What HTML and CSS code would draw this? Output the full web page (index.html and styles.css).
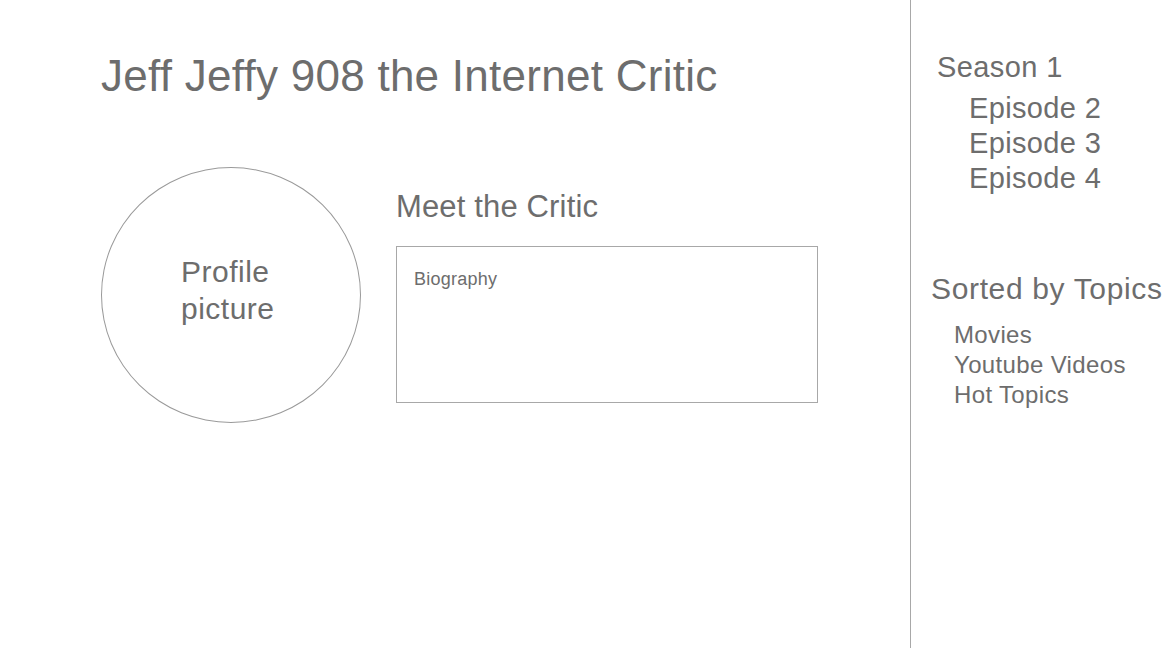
FILE: index.html
```html
<!DOCTYPE html>
<html lang="en">
<head>
<meta charset="utf-8">
<title>Jeff Jeffy 908 the Internet Critic</title>
<link rel="stylesheet" href="styles.css">
</head>
<body>
<div class="page">
  <main class="main">
    <h1 class="title">Jeff Jeffy 908 the Internet Critic</h1>
    <section class="profile">
      <div class="avatar">
        <div class="avatar-text">Profile<br>picture</div>
      </div>
      <div class="about">
        <h2 class="about-title">Meet the Critic</h2>
        <div class="bio">Biography</div>
      </div>
    </section>
  </main>
  <aside class="sidebar">
    <h3 class="season">Season 1</h3>
    <ul class="episodes">
      <li>Episode 2</li>
      <li>Episode 3</li>
      <li>Episode 4</li>
    </ul>
    <h3 class="topics-title">Sorted by Topics</h3>
    <ul class="topics">
      <li>Movies</li>
      <li>Youtube Videos</li>
      <li>Hot Topics</li>
    </ul>
  </aside>
</div>
</body>
</html>
```

FILE: styles.css
```css
* { box-sizing: border-box; }

html, body {
  margin: 0;
  padding: 0;
  background: #ffffff;
}

body {
  font-family: "Liberation Sans", Arial, Helvetica, sans-serif;
  color: #6d6d6d;
}

.page {
  display: flex;
  width: 1165px;
  height: 648px;
  overflow: hidden;
}

.main {
  width: 910px;
  flex: none;
  padding-left: 101px;
  padding-top: 51px;
}

.title {
  margin: 0;
  font-size: 44px;
  line-height: 50px;
  font-weight: normal;
  letter-spacing: 0.27px;
  white-space: nowrap;
}

.profile {
  display: flex;
  align-items: flex-start;
  gap: 35px;
  margin-top: 66px;
}

.avatar {
  width: 260px;
  height: 256px;
  flex: none;
  border: 1px solid #9a9a9a;
  border-radius: 50%;
  padding-left: 79px;
  padding-top: 85px;
}

.avatar-text {
  font-size: 30px;
  line-height: 37px;
  letter-spacing: 0.5px;
}

.about {
  padding-top: 22px;
}

.about-title {
  margin: 0;
  font-size: 31px;
  line-height: 36px;
  font-weight: normal;
  letter-spacing: 0.15px;
}

.bio {
  margin-top: 21px;
  width: 422px;
  height: 157px;
  border: 1px solid #a8a8a8;
  padding: 22px 17px;
  font-size: 18px;
  line-height: 20px;
  letter-spacing: 0.25px;
}

.sidebar {
  flex: 1;
  border-left: 1px solid #a8a8a8;
  padding-top: 50px;
}

.season {
  margin: 0 0 0 26px;
  font-size: 29px;
  line-height: 35px;
  font-weight: normal;
  letter-spacing: 0.4px;
}

.episodes {
  list-style: none;
  margin: 6px 0 0 58px;
  padding: 0;
  font-size: 29px;
  line-height: 35px;
  letter-spacing: 0.35px;
}

.topics-title {
  margin: 75px 0 0 20px;
  font-size: 30px;
  line-height: 36px;
  font-weight: normal;
  letter-spacing: 0.65px;
  white-space: nowrap;
}

.topics {
  list-style: none;
  margin: 13px 0 0 43px;
  padding: 0;
  font-size: 24px;
  line-height: 30px;
  letter-spacing: 0.35px;
  white-space: nowrap;
}
```
